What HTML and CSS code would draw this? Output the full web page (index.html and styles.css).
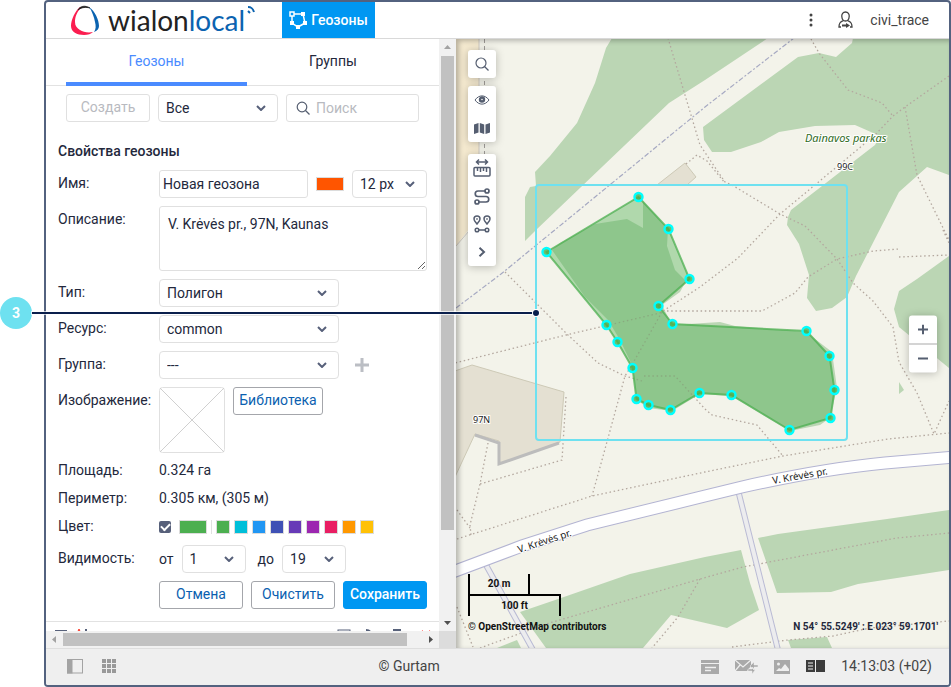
FILE: index.html
```html
<!DOCTYPE html>
<html lang="ru">
<head>
<meta charset="utf-8">
<title>Геозоны</title>
<link rel="stylesheet" href="styles.css">
</head>
<body>
<div class="frame">
  <header class="header">
    <a class="logo" href="#" aria-label="wialon local">
      <svg class="logo-mark" width="30" height="30" viewBox="0 0 30 30" fill="none">
        <path d="M10 2C5 6 1 15 1 21c0 6 6 9 13 9 4 0 7-1 9-3-5 1-10 0-13-2-3-2-5-4-5-8 0-5 2-11 7-15z" fill="#fb1e50"/>
        <path d="M8 5c2-4 7-5 12-2-4-1-8-1-12 2z" fill="#222" stroke="#222" stroke-width=".8"/>
        <path d="M19 2c6 4 10 13 10 19 0 3-2 5-5 6 2-3 2-6 1-10-1-5-3-11-6-15z" fill="#0b63b0"/>
      </svg>
      <span class="logo-name">wialon<span class="logo-local">local</span></span>
      <svg class="logo-waves" width="8" height="8" viewBox="0 0 8 8" fill="none" stroke="#0b63b0" stroke-width="2"><path d="M1 1c4 0 5 2 6 5M1 5l2 2"/></svg>
    </a>
    <button class="app-tab" type="button">
      <svg width="18" height="18" viewBox="0 0 18 18" fill="none" stroke="#fff" stroke-width="1.5"><path d="M3 3l11 0 2 9-7 4-6-4z"/><g fill="#0097f2"><rect x="1" y="1" width="4" height="4"/></g><g fill="#fff" stroke="none"><rect x="12" y="1" width="4" height="4"/><rect x="14" y="10" width="4" height="4"/><rect x="7" y="14" width="4" height="4"/><rect x="1" y="10" width="4" height="4"/></g></svg>
      Геозоны
    </button>
    <div class="user">
      <button class="icon-btn" type="button" aria-label="Меню"><svg width="4" height="14" viewBox="0 0 4 14" fill="#444"><circle cx="2" cy="2" r="1.5"/><circle cx="2" cy="7" r="1.5"/><circle cx="2" cy="12" r="1.5"/></svg></button>
      <svg width="15" height="18" viewBox="0 0 15 18" fill="none" stroke="#444" stroke-width="1.3"><path d="M7.500 1C5 1 3.500 3 3.800 5.500 4 8 5.500 10 7.500 10s3.500-2 3.700-4.500C11.500 3 10 1 7.500 1zM5.500 9.500C3 11 1 11 1 16h2M9.500 9.500C12 11 14 11 14 16h-2"/><path d="M4 14.500h5" stroke-width="2"/><path d="M8 12l4 2.500L8 17z" fill="#444" stroke="none"/></svg>
      <span>civi_trace</span>
    </div>
  </header>

  <main class="main">
    <section class="side">
      <div class="panel">
        <nav class="tabs">
          <a class="tab tab-active" href="#">Геозоны</a>
          <a class="tab" href="#">Группы</a>
        </nav>
        <div class="toolbar">
          <button class="btn btn-muted" type="button">Создать</button>
          <div class="select"><select aria-label="Фильтр"><option>Все</option></select><svg class="chevron" width="10" height="6" viewBox="0 0 10 6"><path d="M1 1l4 4 4-4"/></svg></div>
          <label class="search"><svg width="14" height="14" viewBox="0 0 14 14" fill="none" stroke="#555e70" stroke-width="1.2"><circle cx="6" cy="6" r="4.800"/><path d="M9.500 9.500l4 4"/></svg><input type="text" placeholder="Поиск" aria-label="Поиск"></label>
        </div>

        <form class="form">
          <h2 class="title">Свойства геозоны</h2>

          <label class="label" for="name">Имя:</label>
          <div class="row">
            <input class="input" id="name" type="text" value="Новая геозона">
            <button class="swatch swatch-wide orange" type="button" aria-label="Цвет подписи"></button>
            <div class="select select-font"><select aria-label="Размер шрифта"><option>12 px</option></select><svg class="chevron" width="10" height="6" viewBox="0 0 10 6"><path d="M1 1l4 4 4-4"/></svg></div>
          </div>

          <label class="label" for="desc">Описание:</label>
          <textarea class="textarea" id="desc">V. Krėvės pr., 97N, Kaunas</textarea>

          <label class="label" for="type">Тип:</label>
          <div class="row"><div class="select select-wide"><select id="type"><option>Полигон</option></select><svg class="chevron" width="10" height="6" viewBox="0 0 10 6"><path d="M1 1l4 4 4-4"/></svg></div></div>

          <label class="label" for="res">Ресурс:</label>
          <div class="row"><div class="select select-wide"><select id="res"><option>common</option></select><svg class="chevron" width="10" height="6" viewBox="0 0 10 6"><path d="M1 1l4 4 4-4"/></svg></div></div>

          <label class="label" for="group">Группа:</label>
          <div class="row row-group"><div class="select select-wide"><select id="group"><option>---</option></select><svg class="chevron" width="10" height="6" viewBox="0 0 10 6"><path d="M1 1l4 4 4-4"/></svg></div>
            <button class="icon-btn" type="button" aria-label="Добавить"><svg width="14" height="14" viewBox="0 0 14 14" stroke="#bbbec4" stroke-width="3"><path d="M7 0v14M0 7h14"/></svg></button></div>

          <span class="label">Изображение:</span>
          <div class="row row-top">
            <svg class="thumb-img" width="66" height="66" viewBox="0 0 66 66" fill="none" stroke="#d0d0d0"><rect x=".5" y=".5" width="65" height="65" rx="3" stroke="#e0e0e0"/><path d="M1 1l64 64M65 1L1 65"/></svg>
            <button class="btn btn-library" type="button">Библиотека</button>
          </div>

          <span class="label label-low">Площадь:</span><span class="value">0.324 га</span>
          <span class="label label-low">Периметр:</span><span class="value">0.305 км, (305 м)</span>

          <label class="label label-low" for="color">Цвет:</label>
          <div class="colors">
            <input class="check" id="color" type="checkbox" checked>
            <button class="swatch swatch-wide green" type="button" aria-label="Текущий цвет"></button>
            <div class="palette">
              <button class="swatch green" type="button" aria-label="Зелёный"></button>
              <button class="swatch cyan" type="button" aria-label="Бирюзовый"></button>
              <button class="swatch blue" type="button" aria-label="Голубой"></button>
              <button class="swatch indigo" type="button" aria-label="Синий"></button>
              <button class="swatch violet" type="button" aria-label="Фиолетовый"></button>
              <button class="swatch purple" type="button" aria-label="Пурпурный"></button>
              <button class="swatch pink" type="button" aria-label="Розовый"></button>
              <button class="swatch amber" type="button" aria-label="Оранжевый"></button>
              <button class="swatch yellow" type="button" aria-label="Жёлтый"></button>
            </div>
          </div>

          <span class="label">Видимость:</span>
          <div class="row row-range">
            <label for="from">от</label>
            <div class="select select-zoom"><select id="from"><option>1</option></select><svg class="chevron" width="10" height="6" viewBox="0 0 10 6"><path d="M1 1l4 4 4-4"/></svg></div>
            <label class="to" for="upto">до</label>
            <div class="select select-zoom"><select id="upto"><option>19</option></select><svg class="chevron" width="10" height="6" viewBox="0 0 10 6"><path d="M1 1l4 4 4-4"/></svg></div>
          </div>

          <div class="actions">
            <button class="btn" type="button">Отмена</button>
            <button class="btn" type="button">Очистить</button>
            <button class="btn btn-primary" type="button">Сохранить</button>
          </div>
        </form>

        <div class="list-head">
          <svg width="34" height="14" viewBox="0 0 34 14" fill="none" stroke="#57617a" stroke-width="2"><rect x="2" y="2" width="10" height="10"/><path d="M22 11l3-10 3 10" stroke="#fb4a3c"/><path d="M32 0v12"/></svg>
          <svg width="94" height="14" viewBox="0 0 94 14" fill="none" stroke="#57617a" stroke-width="2"><rect x="1" y="1" width="12" height="10" stroke-width="1"/><path d="M29 1c5 0 6 4 4 8"/><rect x="57" y="1" width="6" height="10" fill="#57617a"/><path d="M85 1l8 9M93 1l-8 9" stroke="#f88" stroke-width="1"/></svg>
        </div>
      </div>
      <div class="scroll-v">
        <svg width="17" height="17" viewBox="0 0 17 17"><path d="M5 10h7L8.500 6z" fill="#a3a3a3"/></svg>
        <div class="thumb-v"></div>
        <svg width="17" height="17" viewBox="0 0 17 17"><path d="M5 7h7l-3.500 4z" fill="#505050"/></svg>
      </div>
      <div class="scroll-h">
        <svg width="17" height="17" viewBox="0 0 17 17"><path d="M10 5v7L6 8.500z" fill="#a3a3a3"/></svg>
        <div class="thumb-h"></div>
        <svg width="17" height="17" viewBox="0 0 17 17"><path d="M7 5v7l4-3.500z" fill="#505050"/></svg>
      </div>
      <div class="corner"></div>
    </section>

    <section class="map" aria-label="Карта">
      <svg class="map-art" viewBox="456 39 493 609" preserveAspectRatio="xMidYMid slice">
        <rect x="0" y="0" width="1500" height="1200" fill="#f3f3ea"/>
        <path d="M456 39h23v160l-10 30-13 17z" fill="#f5ead0"/>
        <path d="M479 39v160l-10 32-13 15" fill="none" stroke="#cfcac2"/>
        <g fill="#bbd6b4">
          <path d="M612 38l-6 10-11 35-18 40-27 33-15 16 1 14-6 1-5 10v44l11-11L669 103l36-23 63-42z"/>
          <path d="M853 38l-1 5-16 14-17-4-21 4-95 70 1 13 8 12h19l30-10 18-10 36-6 40-1 25 11-5 9-84 65-3 7-1 8 12 19 10 31-2 23 9 13 16-3 15-11 9-21 43-84 28-25 22 8V38z"/>
          <path d="M949 256l-32 23-18 12-5 18 5 18 50 41z"/>
          <path d="M899 382l5 8-5 4z"/>
          <path d="M520 612l41-14 69-24 75-17 36-7 9 33 9 27-32 18-56-13-28 33h-97z"/>
          <path d="M758 538l20-4 109-15 62-9v60l-91 14-27 8-54 1z"/>
          <path d="M788 640l39-3 5 11h-41zM497 648l20-8 4 8z"/>
          <path d="M552 250l8-7 35-19 32-5 16 9v-27l25 28-1 17 8 24 11 11-6 11-18 13 10 20 48-3 15 4 71 6 26 20 5 36-7 30-10 7-30 6-59-35-31-2-28 17-24-3-11-8-5-35-12-25-12-20-23-23z"/>
        </g>
        <g fill="#e4e0d2" stroke="#cdc9b6">
          <path d="M455 371l17-6 92 27-4 50-61 22v-23l-24-7-20 43z"/>
          <path d="M657 185l28-22 11 14-9 8z"/>
        </g>
        <path d="M475 435l24 8v21l60-21" fill="none" stroke="#bcbcbc" stroke-width="3"/>
        <g fill="none" stroke="#b3a79e" stroke-width="1.300" stroke-dasharray="1.500 2.700">
          <path d="M668 38l17 57 15 50 10 15 15 22 7 3 48 29 25 12 32 33 16 24 20 18 20 26 6 35 18 31 17 41 15-33"/>
          <path d="M686 164l11-9 10 6 18 22M811 39l8 14 29 37 34 13 11 13M949 76l-44 31-12 9-18 19-95 79-42 44-38 29-40 26-94 22-111 28"/>
          <path d="M905 107l12 68 32 65M667 311h95l33-18 13-16 29-18 36-8 26-2M899 257l50-2M943 230l6 13"/>
          <path d="M505 272l63 63 30 28 27 13 17 5M662 312l-29 51-8 13-23 84-10 36M644 376h31l30 33 7 6 45 10 26 31"/>
          <path d="M457 539l135-43 113-24 78-16 105-17 61-6M566 397l-4 63-82 24M488 443l-8 41-10 41 1 10M457 510l13 18"/>
          <path d="M480 648l66-24 154-45 43-12 90-17 64-12 52-5M700 579l-22 38-26 31M457 607l16 40M732 647l56-7 45-4 37-8 79-7"/>
        </g>
        <path d="M456 308l45-34 204-167 89-69" fill="none" stroke="#a6a9c2" stroke-width="1.200" stroke-dasharray="5 2 2 2"/>
        <path d="M484.500 39v125" fill="none" stroke="#a09c98" stroke-dasharray="4 3"/>
        <g fill="none" stroke="#b9bad4" stroke-width="6"><path d="M486 565l47 85M738 490l40 160"/></g>
        <g fill="none" stroke="#ececee" stroke-width="4"><path d="M486 565l47 85M738 490l40 160"/></g>
        <path d="M450 573l72-27 65-21 118-29 37-9q80-18 143-24l70-6" fill="none" stroke="#b3b4d2" stroke-width="13"/>
        <path d="M450 573l72-27 65-21 118-29 37-9q80-18 143-24l70-6" fill="none" stroke="#fff" stroke-width="11"/>
        <g class="map-text">
          <text x="519" y="553" transform="rotate(-18 519 553)">V. Krėvės pr.</text>
          <text x="773" y="484" transform="rotate(-10 773 484)">V. Krėvės pr.</text>
          <text x="473" y="423" class="map-house">97N</text>
          <text x="837" y="170" class="map-house">99C</text>
          <text x="805" y="142" class="map-park">Dainavos parkas</text>
        </g>
        <path d="M546.500 252l92-55 30 32 21 50-31 27 14 18 134 7 23 25 5 34-4 28-41 12-58-35-32-2-29 17-22-5-12-6-4-31-15-26-11-17z" fill="#4caf50" fill-opacity=".4" stroke="#4caf50" stroke-opacity=".75" stroke-width="2"/>
        <g fill="#4caf50" fill-opacity=".8" stroke="#0ff" stroke-width="2.400">
          <circle cx="546.500" cy="252" r="4"/><circle cx="638.500" cy="197" r="4"/><circle cx="668.500" cy="229" r="4"/><circle cx="689.500" cy="279" r="4"/><circle cx="658.500" cy="306" r="4"/><circle cx="672.500" cy="324" r="4"/><circle cx="806.500" cy="331" r="4"/><circle cx="829.500" cy="356" r="4"/><circle cx="834.500" cy="390" r="4"/><circle cx="830.500" cy="418" r="4"/><circle cx="789.500" cy="430" r="4"/><circle cx="731.500" cy="395" r="4"/><circle cx="699.500" cy="393" r="4"/><circle cx="670.500" cy="410" r="4"/><circle cx="648.500" cy="405" r="4"/><circle cx="636.500" cy="399" r="4"/><circle cx="632.500" cy="368" r="4"/><circle cx="617.500" cy="342" r="4"/><circle cx="606.500" cy="325" r="4"/>
        </g>
        <rect x="536" y="185" width="311" height="255" rx="3" fill="none" stroke="#6ee1f0" stroke-width="2"/>
      </svg>

      <div class="tools">
        <div class="tool-group">
          <button class="tool" type="button" aria-label="Поиск на карте"><svg width="14" height="14" viewBox="0 0 14 14" fill="none" stroke="#555e70" stroke-width="1.200"><circle cx="6" cy="6" r="5"/><path d="M9.500 9.500l4 4"/></svg></button>
        </div>
        <div class="tool-group">
          <button class="tool" type="button" aria-label="Видимость слоёв"><svg width="16" height="10" viewBox="0 0 16 10" fill="none" stroke="#555e70"><path d="M1 5c4-5.500 10-5.500 14 0-4 5.500-10 5.500-14 0z"/><circle cx="8" cy="4.500" r="2" stroke-width="2.400"/></svg></button>
          <button class="tool" type="button" aria-label="Источник карты"><svg width="16" height="11" viewBox="0 0 16 11" fill="#555e70"><path d="M0 1.500L4.500 0v9.500L0 11zM5.800 0l4.400 1.500V11L5.800 9.500zM11.500 1.500L16 0v9.500L11.500 11z"/></svg></button>
        </div>
        <div class="tool-group tool-group-last">
          <button class="tool" type="button" aria-label="Линейка"><svg width="18" height="18" viewBox="0 0 18 18" fill="none" stroke="#555e70" stroke-width="1.500"><path d="M3.500 3h11M6 .5L3.500 3 6 5.500M12 .5L14.500 3 12 5.500"/><rect x="1" y="8.500" width="16" height="8.500" rx="1"/><path d="M4.500 9v3M7.500 9v4M10.500 9v3M13.500 9v4"/></svg></button>
          <button class="tool" type="button" aria-label="Маршрут"><svg width="16" height="17" viewBox="0 0 16 17" fill="none" stroke="#555e70" stroke-width="1.700"><circle cx="13" cy="3" r="2"/><circle cx="3" cy="14" r="2"/><path d="M11 3H4a2.750 2.750 0 000 5.500h8a2.750 2.750 0 010 5.500H5M6 8.500h4"/></svg></button>
          <button class="tool" type="button" aria-label="Точки"><svg width="18" height="18" viewBox="0 0 18 18" fill="none" stroke="#555e70" stroke-width="1.500"><path d="M4 9C2 6.500 1 5.500 1 4a3 3 0 016 0c0 1.500-1 2.500-3 5zM14 9c-2-2.500-3-3.500-3-5a3 3 0 016 0c0 1.500-1 2.500-3 5z"/><path d="M4 3.200v1.500M14 3.200v1.500"/><circle cx="4" cy="15" r="1.800"/><circle cx="14" cy="15" r="1.800"/><path d="M6 15h6"/></svg></button>
          <button class="tool" type="button" aria-label="Ещё"><svg width="8" height="10" viewBox="0 0 8 10" fill="none" stroke="#555e70" stroke-width="2"><path d="M1.500 .8L6 5 1.500 9.200"/></svg></button>
        </div>
      </div>

      <div class="zoom">
        <button class="tool" type="button" aria-label="Приблизить"><svg width="10" height="10" viewBox="0 0 10 10" stroke="#555e70" stroke-width="2"><path d="M5 0v10M0 5h10"/></svg></button>
        <button class="tool" type="button" aria-label="Отдалить"><svg width="10" height="10" viewBox="0 0 10 10" stroke="#555e70" stroke-width="2"><path d="M0 5h10"/></svg></button>
      </div>

      <div class="map-info">
        <div class="scale scale-m">20 m</div>
        <div class="scale scale-ft">100 ft</div>
        <div>© OpenStreetMap contributors</div>
      </div>
      <div class="coords">N 54° 55.5249' : E 023° 59.1701'</div>
    </section>
  </main>

  <footer class="footer">
    <div class="foot-left">
      <button class="icon-btn" type="button" aria-label="Панель"><svg width="17" height="15" viewBox="0 0 17 15" fill="none" stroke="#a3a3a3"><rect x=".5" y=".5" width="15" height="13.500"/><rect x=".5" y=".5" width="4.500" height="13.500" fill="#a3a3a3"/></svg></button>
      <button class="icon-btn" type="button" aria-label="Приложения"><svg width="15" height="14" viewBox="0 0 15 14" fill="#999"><path d="M0 0h4v4H0zM5 0h4v4H5zM10 0h4v4h-4zM0 5h4v4H0zM5 5h4v4H5zM10 5h4v4h-4zM0 10h4v4H0zM5 10h4v4H5zM10 10h4v4h-4z"/></svg></button>
    </div>
    <span>© Gurtam</span>
    <div class="foot-right">
      <button class="icon-btn" type="button" aria-label="Уведомления"><svg width="18" height="15" viewBox="0 0 18 15" fill="#a9a9a9"><path d="M0 1h18v3H0zM0 5h18v10H0z"/><path d="M4 8.500h11M4 11.500h6" stroke="#efefef" stroke-width="1.300"/></svg></button>
      <button class="icon-btn" type="button" aria-label="Сообщения"><svg width="23" height="15" viewBox="0 0 23 15" fill="#a9a9a9"><path d="M0 1h16v6l-4 5H0z"/><path d="M0 1l8 7 8-7M0 12l5-6" fill="none" stroke="#efefef" stroke-width="1.200"/><path d="M15 7l4-4v3h4v2h-4v3zM20 11l-3-3v2h-4v2h4v3z" stroke="#efefef" stroke-width=".5"/></svg></button>
      <button class="icon-btn" type="button" aria-label="Изображения"><svg width="16" height="15" viewBox="0 0 16 15" fill="#a9a9a9"><path d="M0 1h16v14H0z"/><circle cx="4.500" cy="5" r="1.500" fill="#efefef"/><path d="M2 12l3-3 2 1 4-5 4 5v2z" fill="#efefef"/></svg></button>
      <button class="icon-btn" type="button" aria-label="Журнал"><svg width="19" height="12" viewBox="0 0 19 12" fill="#3c3c3c"><path d="M0 0h9v12H0zM10 0h9v12h-9z"/><path d="M2 3h5M2 6h5M2 9h5" stroke="#efefef" stroke-width="1.200"/></svg></button>
      <span class="clock">14:13:03 (+02)</span>
    </div>
  </footer>
</div>

<div class="callout"><span class="callout-num">3</span><span class="callout-line"></span><span class="callout-dot"></span></div>
</body>
</html>
```

FILE: styles.css
```css
* { box-sizing: border-box; }

body {
  margin: 0;
  background: #fff;
  color: #23283c;
  font: 14px/18px Roboto, "Open Sans", sans-serif;
  position: relative;
}

button, input, select, textarea {
  font: inherit;
  color: inherit;
  margin: 0;
}

button { cursor: pointer; }
a { color: inherit; text-decoration: none; }
svg { display: block; flex: none; }

.frame {
  display: grid;
  grid-template-rows: auto minmax(0, 1fr) auto;
  height: 100vh;
  margin-left: 44px;
  border: 2px solid #53627f;
  border-radius: 4px;
  overflow: hidden;
}

/* Header */
.header {
  display: flex;
  align-items: center;
  height: 37px;
  padding: 0 20px 0 24px;
  border-bottom: 1px solid #d9d9d9;
}

.logo {
  display: flex;
  align-items: center;
  width: 212px;
}

.logo-name {
  margin-left: 8px;
  color: #222;
  font: 28px/32px Lato, sans-serif;
}

.logo-local { color: #0b63b0; }

.logo-waves {
  align-self: flex-start;
  margin: 2px 0 0 2px;
}

.app-tab {
  display: flex;
  align-items: center;
  justify-content: center;
  gap: 4px;
  align-self: stretch;
  width: 93px;
  padding: 0;
  border: 0;
  background: #0097f2;
  color: #fff;
  font-weight: 500;
}

.user {
  display: flex;
  align-items: center;
  margin-left: auto;
  color: #444;
}

.user svg { margin-right: 17px; }
.user .icon-btn svg { margin-right: 25px; }

.icon-btn {
  padding: 0;
  border: 0;
  background: none;
}

/* Side panel */
.main {
  display: flex;
  min-height: 0;
}

.side {
  flex: none;
  display: grid;
  grid-template-columns: 393px 17px;
  grid-template-rows: minmax(0, 1fr) 17px;
}

.panel {
  overflow: hidden;
  background: #fff;
}

.tabs {
  display: flex;
  height: 47px;
  padding: 0 20px;
  border-bottom: 1px solid #e2e2e2;
}

.tab {
  flex: 1;
  height: 47px;
  line-height: 45px;
  text-align: center;
}

.tab-active {
  flex: 0 0 181px;
  border-bottom: 4px solid #4a8bff;
  color: #4a8bff;
}

.toolbar {
  display: grid;
  grid-template-columns: 84px 120px 133px;
  gap: 8px;
  padding: 8px 20px 0;
}

.btn {
  height: 28px;
  padding: 0 0 2px;
  border: 1px solid #a4a6ab;
  border-radius: 3px;
  background: #fff;
  color: #0b5fb0;
}

.btn-muted {
  border-color: #e0e0e0;
  color: #b8bac0;
}

.btn-primary {
  border-color: #0097f2;
  background: #0097f2;
  color: #fff;
  font-weight: 500;
}

.btn-library { width: 90px; }

.select {
  position: relative;
  height: 28px;
}

.select select {
  appearance: none;
  width: 100%;
  height: 28px;
  padding: 0 24px 0 7px;
  border: 1px solid #e0e0e0;
  border-radius: 4px;
  background: #fff;
}

.chevron {
  position: absolute;
  top: 11px;
  right: 12px;
  fill: none;
  stroke: #57607a;
  stroke-width: 2;
  pointer-events: none;
}

.select-wide { width: 180px; }
.select-font { width: 75px; }
.select-zoom { width: 64px; }

.search {
  display: flex;
  align-items: center;
  gap: 6px;
  height: 28px;
  padding-left: 9px;
  border: 1px solid #e0e0e0;
  border-radius: 3px;
}

.search input {
  width: 90px;
  padding: 0;
  border: 0;
  background: none;
}

.search input::placeholder { color: #b8bac0; }

/* Geofence form */
.form {
  display: grid;
  grid-template-columns: 101px 268px;
  row-gap: 8px;
  padding: 20px 12px 12px;
  border-bottom: 1px solid #e2e2e2;
}

.title {
  grid-column: 1 / -1;
  margin: 0;
  padding-bottom: 2px;
  font-size: 14px;
  font-weight: 500;
}

.label { line-height: 26px; }
.label-low { line-height: 18px; }

.value {
  height: 20px;
  line-height: 18px;
}

.row {
  display: flex;
  align-items: center;
  justify-content: space-between;
}

.row-top {
  align-items: flex-start;
  justify-content: flex-start;
  gap: 8px;
}

.row-group {
  justify-content: flex-start;
  gap: 16px;
}

.row-range {
  justify-content: flex-start;
  gap: 8px;
}

.to { margin-left: 4px; }

.input {
  width: 149px;
  height: 28px;
  padding: 0 3px;
  border: 1px solid #e0e0e0;
  border-radius: 3px;
}

.textarea {
  display: block;
  height: 65px;
  padding: 8px;
  border: 1px solid #e0e0e0;
  border-radius: 3px;
}

.colors {
  display: flex;
  align-items: center;
  height: 20px;
}

.check {
  appearance: none;
  display: grid;
  place-items: center;
  width: 12px;
  height: 12px;
  margin-right: 8px;
  border-radius: 2px;
  background: #57607a;
}

.check::after {
  content: "";
  width: 7px;
  height: 4px;
  margin-bottom: 2px;
  border: solid #fff;
  border-width: 0 0 2px 2px;
  transform: rotate(-45deg);
}

.palette {
  display: flex;
  gap: 4px;
  margin-left: 4px;
  padding-left: 4px;
  border-left: 1px solid #e0e0e0;
}

.swatch {
  width: 14px;
  height: 14px;
  padding: 0;
  border: 1px solid #dcdcdc;
}

.swatch-wide { width: 28px; }
.orange { background: #ff5500; }
.green { background: #4caf50; }
.cyan { background: #00bfd9; }
.blue { background: #2196f3; }
.indigo { background: #3f51b5; }
.violet { background: #673ab7; }
.purple { background: #9c27b0; }
.pink { background: #e91e63; }
.amber { background: #ff9800; }
.yellow { background: #ffc107; }

.actions {
  grid-column: 2;
  display: grid;
  grid-template-columns: repeat(3, 1fr);
  gap: 8px;
}

.list-head {
  display: flex;
  justify-content: space-between;
  padding: 7px 8px;
}

/* Scroll bars */
.scroll-v,
.scroll-h {
  display: flex;
  background: #f1f1f1;
}

.scroll-v { flex-direction: column; }
.thumb-v, .thumb-h { background: #c1c1c1; }
.thumb-v { flex: 0 0 80%; margin: 0 2px; }
.scroll-v svg:last-child { margin-top: auto; }
.thumb-h { width: 344px; margin: 2px 0; }
.scroll-h svg:last-child { margin-left: auto; }
.corner { background: #dcdcdc; }

/* Map */
.map {
  position: relative;
  flex: 1;
  overflow: hidden;
}

.map::after {
  content: "";
  position: absolute;
  inset: 0;
  box-shadow: inset 3px 2px 5px rgba(0, 0, 0, .25);
  pointer-events: none;
}

.map-art {
  position: absolute;
  inset: 0;
  width: 100%;
  height: 100%;
}

.map-text {
  fill: #222;
  stroke: #fff;
  stroke-width: 2px;
  paint-order: stroke;
  font: 10px "Noto Sans", sans-serif;
}

.map-house { font-size: 9px; }

.map-park {
  fill: #2f6b1c;
  font-size: 11px;
  font-style: italic;
}

.tools {
  position: absolute;
  z-index: 1;
  top: 11px;
  left: 12px;
  display: grid;
  gap: 8px;
}

.tool-group,
.zoom {
  width: 28px;
  border-radius: 3px;
  background: #fff;
  box-shadow: 0 1px 8px rgba(0, 0, 0, .25);
}

.tool-group-last { margin-top: 4px; }

.tool {
  display: grid;
  place-items: center;
  width: 28px;
  height: 28px;
  padding: 0;
  border: 0;
  background: none;
}

.zoom {
  position: absolute;
  top: 50%;
  right: 12px;
  transform: translateY(-50%);
}

.zoom .tool + .tool {
  height: 29px;
  border-top: 1px solid #aaa;
}

.map-info {
  position: absolute;
  bottom: 12px;
  left: 12px;
  color: #111;
  font-size: 10px;
  font-weight: 700;
}

.scale {
  border: 2px solid #000;
  border-bottom: 0;
  text-align: center;
}

.scale-m {
  width: 62px;
  height: 20px;
  border-top: 0;
  line-height: 20px;
}

.scale-ft {
  width: 93px;
  height: 22px;
  margin-bottom: 2px;
  line-height: 20px;
}

.coords {
  position: absolute;
  right: 11px;
  bottom: 12px;
  font-size: 10px;
  font-weight: 700;
}

/* Footer */
.footer {
  display: flex;
  align-items: center;
  justify-content: space-between;
  height: 37px;
  padding: 0 17px 2px 21px;
  border-top: 1px solid #dedede;
  background: #efefef;
  color: #444;
}

.foot-left,
.foot-right {
  display: flex;
  align-items: center;
}

.foot-left { gap: 18px; }
.foot-right { gap: 16px; }

/* Numbered pointer laid over the window */
.callout {
  position: absolute;
  top: 297px;
  left: 0;
  display: flex;
  align-items: center;
  width: 539px;
  pointer-events: none;
}

.callout-num {
  width: 32px;
  height: 32px;
  border-radius: 50%;
  background: #6ee1f0;
  color: #fff;
  font-weight: 700;
  line-height: 32px;
  text-align: center;
}

.callout-line {
  flex: 1;
  height: 2px;
  background: #0a1f4c;
  box-shadow: 0 0 0 1px rgba(255, 255, 255, .7);
}

.callout-dot {
  width: 6px;
  height: 6px;
  border-radius: 50%;
  background: #0a1f4c;
  box-shadow: 0 0 0 1px #fff;
}
```
